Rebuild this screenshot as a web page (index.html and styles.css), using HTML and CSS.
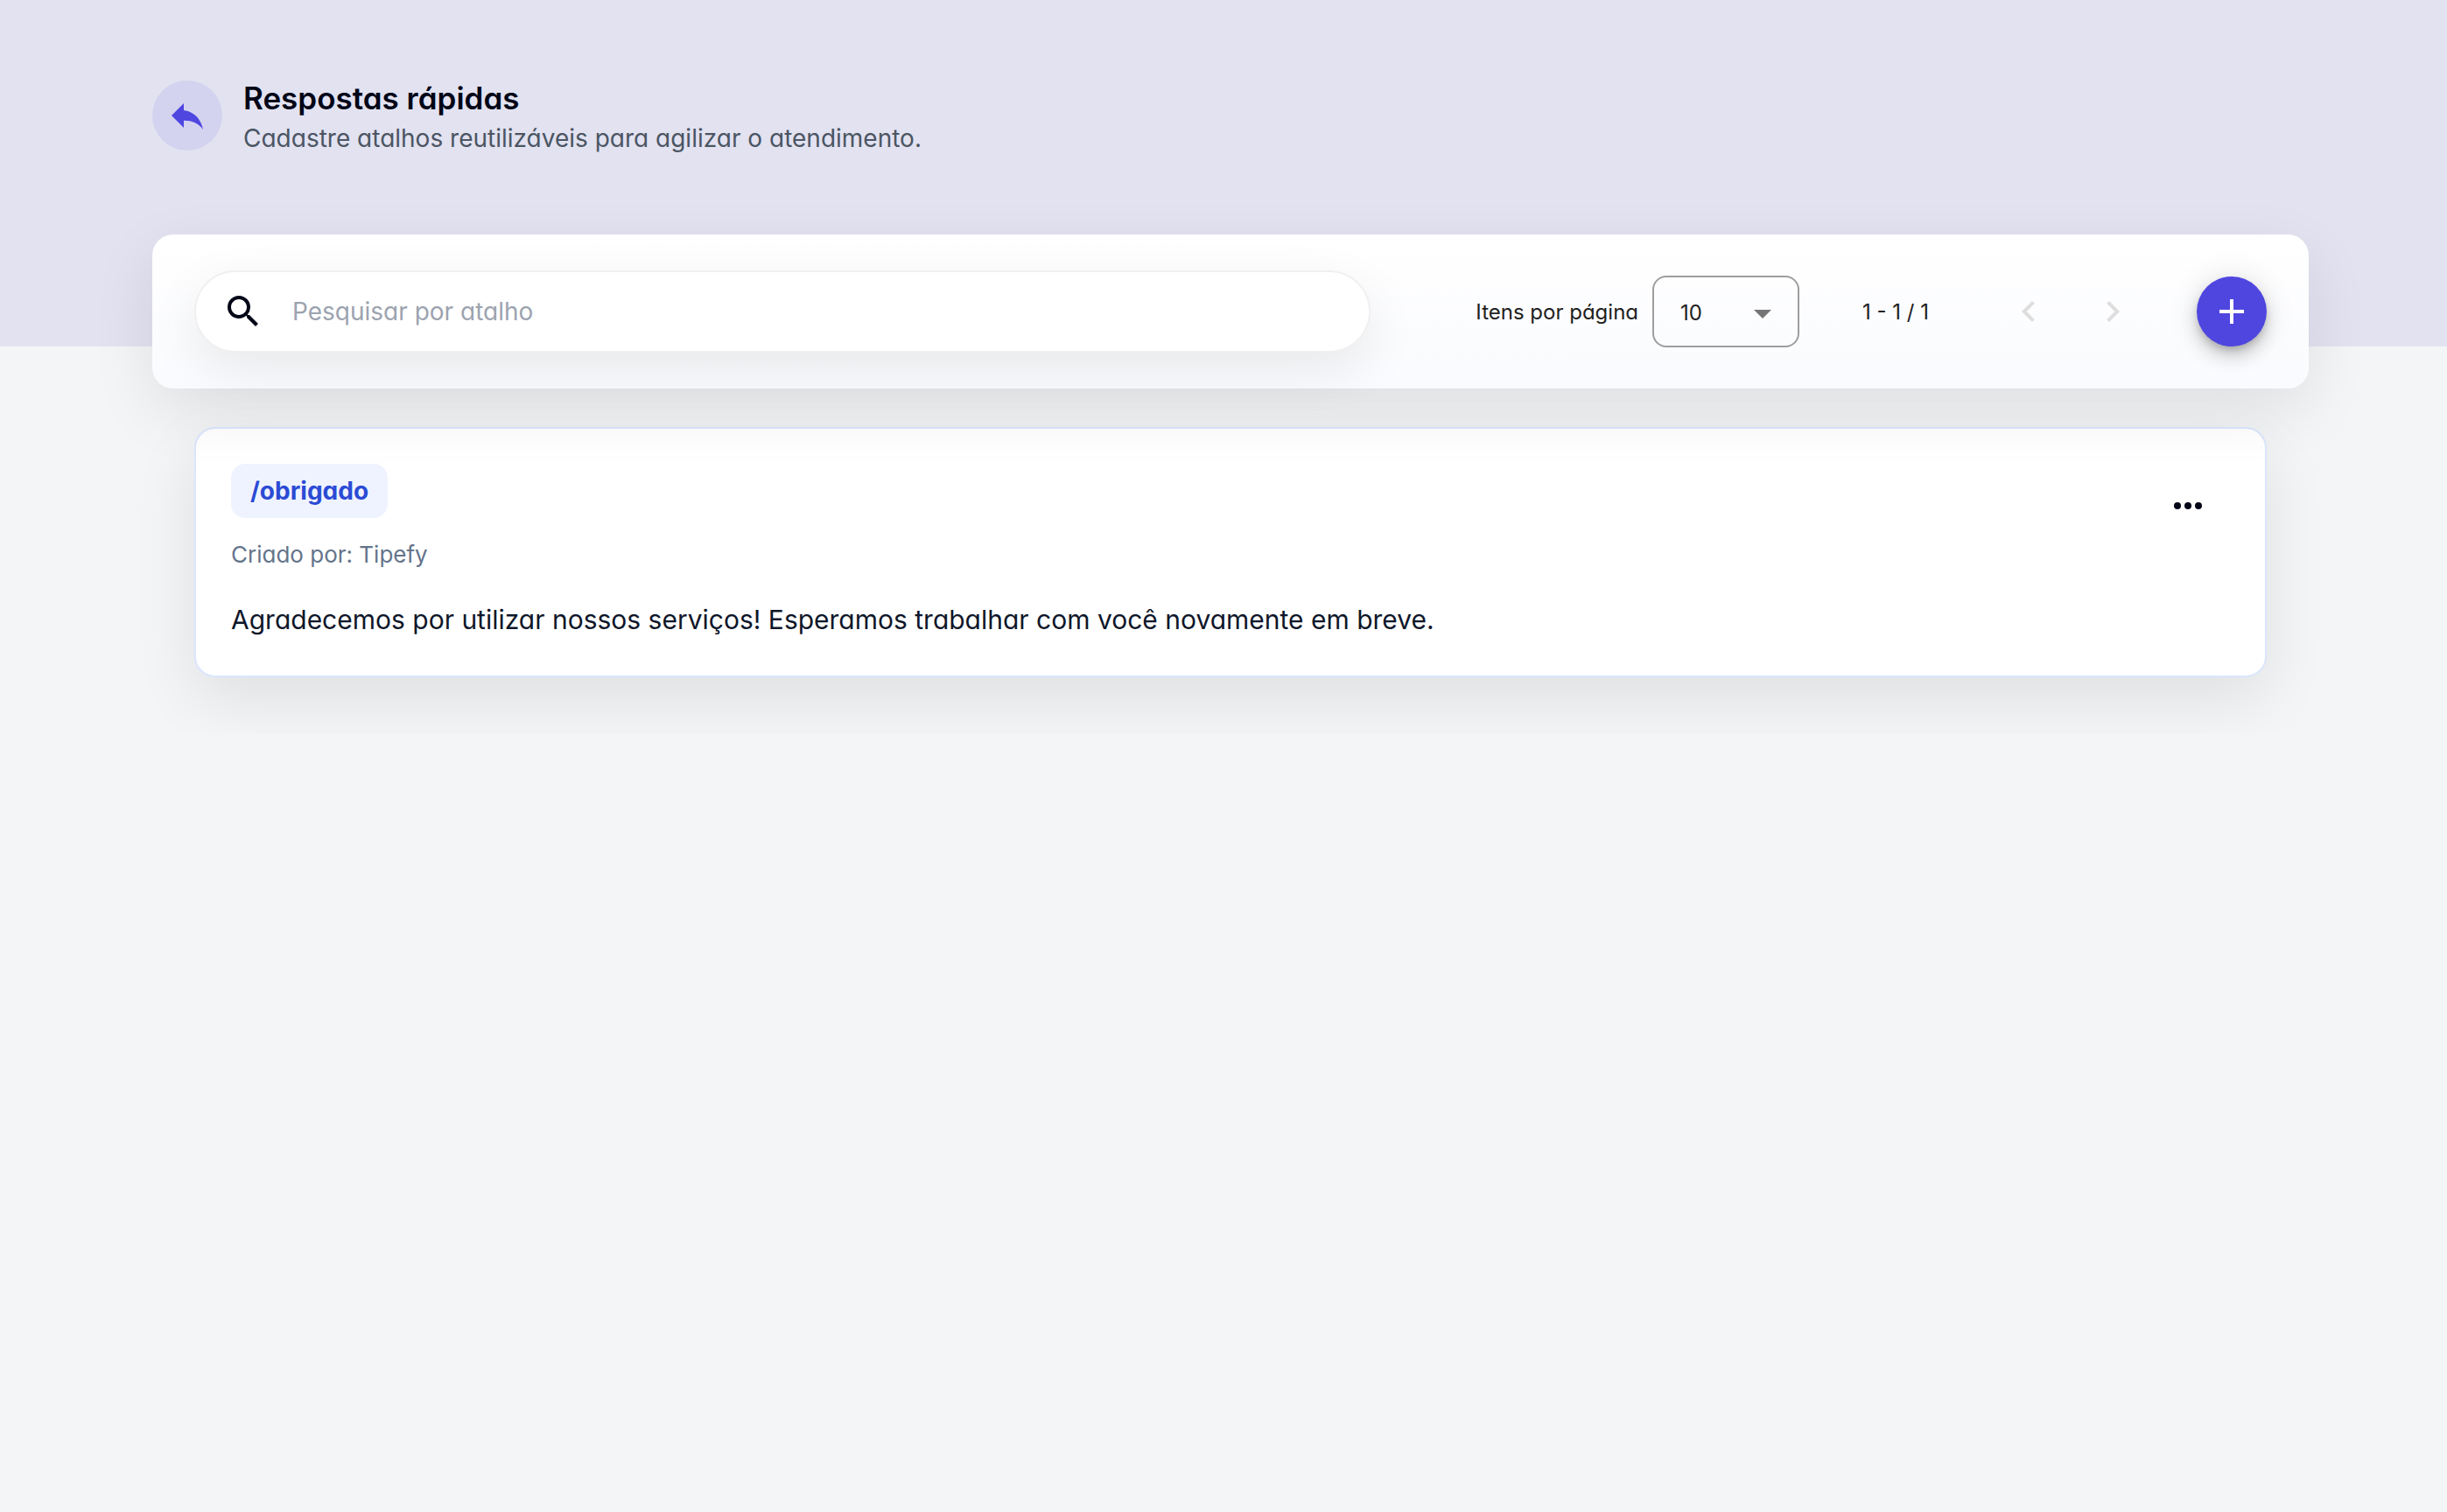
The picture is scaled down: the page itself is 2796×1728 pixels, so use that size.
FILE: index.html
```html
<!DOCTYPE html>
<html lang="pt-BR">
<head>
  <meta charset="UTF-8">
  <meta name="viewport" content="width=device-width, initial-scale=1.0">
  <title>Respostas rápidas</title>
  <link rel="stylesheet" href="styles.css">
</head>
<body>
  <header class="page-header">
    <button class="back-button" type="button" aria-label="Voltar">
      <svg class="icon" viewBox="0 0 24 24"><path d="M10 9V5l-7 7 7 7v-4.1c5 0 8.5 1.6 11 5.1-1-5-4-10-11-11z"/></svg>
    </button>
    <div>
      <h1>Respostas rápidas</h1>
      <p class="subtitle">Cadastre atalhos reutilizáveis para agilizar o atendimento.</p>
    </div>
  </header>

  <main>
    <section class="toolbar">
      <label class="search">
        <svg class="icon" viewBox="0 0 24 24"><path d="M15.5 14h-.79l-.28-.27A6.471 6.471 0 0 0 16 9.5 6.5 6.5 0 1 0 9.5 16c1.61 0 3.09-.59 4.23-1.57l.27.28v.79l5 4.99L20.49 19l-4.99-5zm-6 0C7.01 14 5 11.99 5 9.5S7.01 5 9.5 5 14 7.01 14 9.5 11.99 14 9.5 14z"/></svg>
        <input type="text" placeholder="Pesquisar por atalho" aria-label="Pesquisar por atalho">
      </label>

      <div class="paginator">
        <label for="page-size">Itens por página</label>
        <div class="select">
          <select id="page-size">
            <option>10</option>
            <option>25</option>
            <option>50</option>
          </select>
          <svg class="arrow" viewBox="0 0 20 10"><path d="M0 0h20L10 10z"/></svg>
        </div>
        <span class="range">1 - 1 / 1</span>
        <button class="page-button" type="button" aria-label="Página anterior" disabled>
          <svg class="icon" viewBox="0 0 24 24"><path d="M15.41 7.41L14 6l-6 6 6 6 1.41-1.41L10.83 12z"/></svg>
        </button>
        <button class="page-button" type="button" aria-label="Próxima página" disabled>
          <svg class="icon" viewBox="0 0 24 24"><path d="M10 6L8.59 7.41 13.17 12l-4.58 4.59L10 18l6-6z"/></svg>
        </button>
      </div>

      <button class="add-button" type="button" aria-label="Adicionar">
        <svg class="icon" viewBox="0 0 24 24"><path d="M19 13h-6v6h-2v-6H5v-2h6V5h2v6h6z"/></svg>
      </button>
    </section>

    <article class="reply">
      <div class="reply-content">
        <span class="shortcut">/obrigado</span>
        <p class="author">Criado por: Tipefy</p>
        <p class="message">Agradecemos por utilizar nossos serviços! Esperamos trabalhar com você novamente em breve.</p>
      </div>
      <button class="menu-button" type="button" aria-label="Opções">
        <svg viewBox="0 0 20 20"><circle cx="4" cy="10" r="2"/><circle cx="10" cy="10" r="2"/><circle cx="16" cy="10" r="2"/></svg>
      </button>
    </article>
  </main>
</body>
</html>
```
FILE: styles.css
```css
* {
  box-sizing: border-box;
}

body {
  margin: 0;
  background-color: #f3f5f7;
  color: #020617;
  font-family: Inter, "Liberation Sans", sans-serif;
  font-feature-settings: "cv11";
}

h1,
p {
  margin: 0;
}

button {
  display: flex;
  align-items: center;
  justify-content: center;
  flex-shrink: 0;
  padding: 0;
  border: none;
  background: none;
  color: inherit;
}

svg {
  display: block;
  fill: currentColor;
}

.icon {
  width: 48px;
  height: 48px;
  flex-shrink: 0;
}

/* Header */
.page-header {
  display: flex;
  align-items: flex-start;
  gap: 24px;
  height: 396px;
  padding: 88px 158px 0 174px;
  background-color: #e2e2f1;
}

.back-button {
  width: 80px;
  height: 80px;
  margin-top: 4px;
  border-radius: 50%;
  background-color: #d3d3f0;
  color: #4f46e0;
}

h1 {
  font-size: 35px;
  font-weight: 600;
  line-height: 48px;
}

.subtitle {
  color: #4b5563;
  font-size: 28px;
  line-height: 44px;
}

/* Toolbar */
main {
  margin-top: -128px;
  padding: 0 158px 64px 174px;
}

.toolbar {
  position: relative;
  z-index: 1;
  display: flex;
  align-items: center;
  height: 176px;
  padding: 0 48px;
  border-radius: 24px;
  background: linear-gradient(#ffffff, #fafbfe);
  box-shadow: 0 24px 72px rgba(0, 0, 0, 0.09);
}

.search {
  display: flex;
  align-items: center;
  flex: 1;
  gap: 32px;
  height: 94px;
  padding: 0 30px;
  border: 2px solid #f0f0f0;
  border-radius: 47px;
  background-color: #ffffff;
  box-shadow: 0 20px 60px rgba(0, 0, 0, 0.08);
}

.search input {
  flex: 1;
  min-width: 0;
  padding: 0;
  border: none;
  outline: none;
  background: none;
  font: inherit;
  font-size: 28px;
  font-feature-settings: inherit;
}

.search input::placeholder {
  color: #9ca3af;
  opacity: 1;
}

.paginator {
  display: flex;
  align-items: center;
  margin: 0 48px 0 120px;
  color: #212121;
  font-size: 24px;
}

.select {
  position: relative;
  width: 168px;
  height: 82px;
  margin: 0 72px 0 16px;
}

.select select {
  width: 100%;
  height: 100%;
  padding: 2px 30px 0;
  border: 2px solid #9e9e9e;
  border-radius: 16px;
  background: none;
  appearance: none;
  color: inherit;
  font: inherit;
  font-feature-settings: inherit;
}

.arrow {
  position: absolute;
  top: 39px;
  right: 32px;
  width: 20px;
  height: 10px;
  color: #757575;
  pointer-events: none;
}

.range {
  margin-right: 66px;
}

.page-button {
  width: 96px;
  height: 96px;
  color: #dedede;
}

.add-button {
  width: 80px;
  height: 80px;
  border-radius: 50%;
  background-color: #4f46e0;
  color: #ffffff;
  box-shadow: 0 6px 10px -2px rgba(0, 0, 0, 0.2), 0 12px 20px rgba(0, 0, 0, 0.14), 0 2px 36px rgba(0, 0, 0, 0.12);
}

/* Reply card */
.reply {
  display: flex;
  align-items: flex-start;
  justify-content: space-between;
  margin: 44px 48px 0;
  padding: 40px 48px 36px 40px;
  border: 2px solid #dbe6fd;
  border-radius: 24px;
  background-color: #ffffff;
  box-shadow: 0 24px 72px rgba(0, 0, 0, 0.09);
}

.shortcut {
  display: inline-block;
  padding: 12px 22px;
  border-radius: 16px;
  background-color: #eff3ff;
  color: #2b4bd4;
  font-size: 28px;
  font-weight: 700;
  line-height: 38px;
}

.author {
  margin-top: 22px;
  color: #64748b;
  font-size: 26px;
  line-height: 40px;
}

.message {
  margin-top: 26px;
  color: #0f172a;
  font-size: 30px;
  line-height: 56px;
}

.menu-button {
  width: 80px;
  height: 80px;
  margin-top: 8px;
}

.menu-button svg {
  width: 40px;
  height: 40px;
}
```
